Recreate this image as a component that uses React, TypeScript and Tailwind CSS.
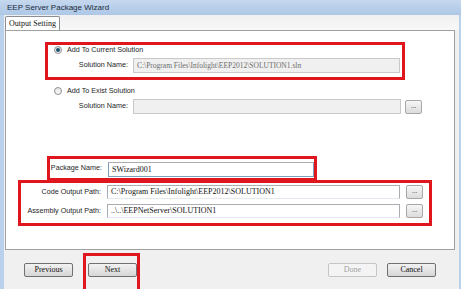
import React from "react";

const sans = "font-['Liberation_Sans',Arial,sans-serif]";
const serif = "font-['Liberation_Serif','Times_New_Roman',serif]";

function Radio({ checked }: { checked?: boolean }) {
  return (
    <span className="flex h-[8px] w-[8px] items-center justify-center rounded-full border border-[#8e8f8f] bg-gradient-to-b from-[#e6e6e6] to-[#fafafa]">
      {checked && <span className="h-[4px] w-[4px] rounded-full bg-[#1d4f6e]" />}
    </span>
  );
}

function Dots() {
  return (
    <div className={`flex h-[14px] w-[17px] items-end justify-center rounded-[2px] border border-[#a7a7a7] bg-gradient-to-b from-[#f6f6f6] to-[#dcdcdc] pb-[3px] text-[7px] leading-none text-[#333] ${serif}`}>
      ...
    </div>
  );
}

function Btn({ label, disabled }: { label: string; disabled?: boolean }) {
  return (
    <div
      className={`flex h-[14px] w-[49px] items-center justify-center rounded-[2px] border text-[8px] leading-none ${serif} ${
        disabled
          ? "border-[#c3c6c8] bg-[#f4f4f4] text-[#a3a3a3]"
          : "border-[#707070] bg-gradient-to-b from-[#f2f2f2] to-[#d6d6d6] text-[#111]"
      }`}
    >
      {label}
    </div>
  );
}

export default function App() {
  return (
    <div className="flex h-[289px] w-[461px] flex-col overflow-hidden bg-[#b9d1ea]">
      {/* title bar */}
      <div className={`flex h-[15px] shrink-0 items-center bg-gradient-to-b from-[#c5d8ee] to-[#adc7e6] pl-[7px] text-[8px] text-[#1b2a3c] ${sans}`}>
        EEP Server Package Wizard
      </div>

      <div className="ml-[4px] mr-[2px] flex flex-1 flex-col bg-[#f0f0f0]">
        {/* tab strip */}
        <div className="flex h-[15px] shrink-0 items-end bg-gradient-to-b from-[#f0f0f0] to-[#f8f8f8]">
          <div className={`ml-[1px] flex h-[14px] w-[55px] items-center justify-center rounded-t-[2px] border border-b-0 border-[#8c8e94] bg-white text-[8px] text-[#111] ${serif}`}>
            Output Setting
          </div>
        </div>

        {/* content panel */}
        <div className={`ml-[1px] flex h-[220px] w-[450px] flex-col border border-[#a0a0a0] bg-white text-[7.2px] text-[#1e1e1e] ${sans}`}>
          {/* add to current solution */}
          <div className="ml-[39px] mt-[11px] flex h-[38px] w-[360px] flex-col border-[3px] border-[#e0161f]">
            <div className="flex h-[10px] items-center pl-[6px]">
              <Radio checked />
              <span className="ml-[5px]">Add To Current Solution</span>
            </div>
            <div className="mt-[3px] flex items-center">
              <span className="w-[80px] text-right">Solution Name:</span>
              <div className={`ml-[5px] flex h-[15px] w-[267px] items-center border border-[#c9c9c9] bg-[#f0f0f0] pl-[3px] text-[7.5px] text-[#6d6d6d] ${serif}`}>
                C:\Program Files\Infolight\EEP2012\SOLUTION1.sln
              </div>
            </div>
          </div>

          {/* add to exist solution */}
          <div className="ml-[48px] mt-[6px] flex h-[10px] items-center">
            <Radio />
            <span className="ml-[5px]">Add To Exist Solution</span>
          </div>
          <div className="ml-[42px] mt-[3px] flex items-center">
            <span className="w-[80px] text-right">Solution Name:</span>
            <div className="ml-[5px] h-[15px] w-[268px] border border-[#c9c9c9] bg-[#f0f0f0]" />
            <div className="ml-[4px]">
              <Dots />
            </div>
          </div>

          {/* package name */}
          <div className="ml-[41px] mt-[42px] flex h-[25px] w-[270px] items-end border-[3px] border-[#e0161f] pb-[1px]">
            <span className="mb-[3px] w-[52px] text-right">Package Name:</span>
            <div className={`ml-[6px] flex h-[15px] flex-1 items-center border border-[#7f9db9] border-t-[#abadb3] bg-white pl-[3px] text-[8px] text-[#111] ${serif}`}>
              SWizard001
            </div>
          </div>

          {/* output paths */}
          <div className="ml-[12px] mt-[-1px] flex h-[46px] w-[414px] flex-col gap-[5px] border-[3px] border-[#e0161f] pt-[2px]">
            <div className="flex items-center">
              <span className="w-[80px] text-right">Code Output Path:</span>
              <div className={`ml-[6px] flex h-[14px] w-[293px] items-center border border-[#abadb3] border-b-[#e3e9ef] bg-white pl-[3px] text-[8px] text-[#111] ${serif}`}>
                C:\Program Files\Infolight\EEP2012\SOLUTION1
              </div>
              <div className="ml-[6px]">
                <Dots />
              </div>
            </div>
            <div className="flex items-center">
              <span className="w-[80px] text-right">Assembly Output Path:</span>
              <div className={`ml-[6px] flex h-[14px] w-[293px] items-center border border-[#abadb3] border-b-[#e3e9ef] bg-white pl-[3px] text-[8px] text-[#111] ${serif}`}>
                ..\..\EEPNetServer\SOLUTION1
              </div>
              <div className="ml-[6px]">
                <Dots />
              </div>
            </div>
          </div>
        </div>

        {/* footer */}
        <div className="flex flex-1 items-start">
          <div className="ml-[20px] mt-[13px]">
            <Btn label="Previous" />
          </div>
          <div className="ml-[10px] mt-[3px] h-[40px] w-[57px] shrink-0 border-[3px] border-[#e0161f] pl-[2px] pt-[7px]">
            <Btn label="Next" />
          </div>
          <div className="flex-1" />
          <div className="mt-[13px]">
            <Btn label="Done" disabled />
          </div>
          <div className="ml-[10px] mr-[23px] mt-[13px]">
            <Btn label="Cancel" />
          </div>
        </div>
      </div>
    </div>
  );
}
